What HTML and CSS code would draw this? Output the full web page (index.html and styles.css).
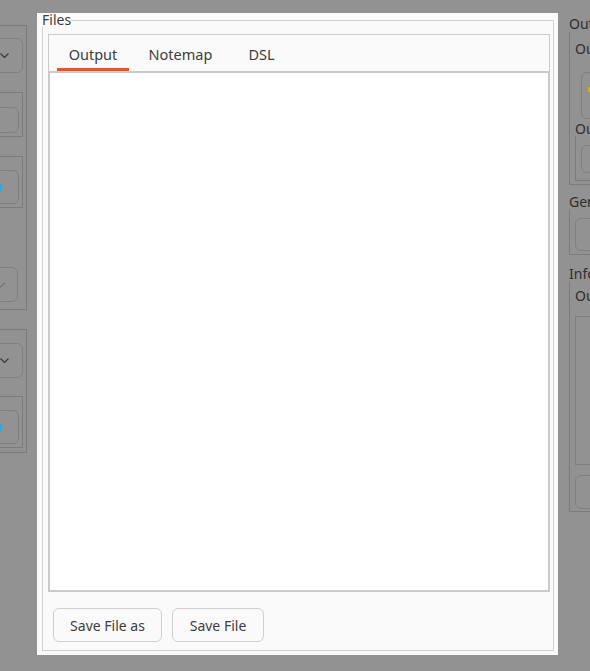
FILE: index.html
```
<!DOCTYPE html>
<html>
<head>
<meta charset="utf-8">
<link rel="stylesheet" href="styles.css">
</head>
<body>
<div class="left-strip">
  <div class="bg-frame frame-1">
    <div class="bg-combo combo-1">
      <svg class="chev" width="9" height="5" viewBox="0 0 9 5"><path d="M0.5 0.5 L4.5 4.5 L8.5 0.5" fill="none" stroke="#3a3a3a" stroke-width="1.2"/></svg>
    </div>
    <div class="bg-frame frame-a"><div class="bg-btn btn-a"></div></div>
    <div class="bg-frame frame-b"><div class="bg-btn btn-b"><span class="cyan"></span></div></div>
    <div class="bg-btn btn-c">
      <svg class="tick" width="6" height="6" viewBox="0 0 6 6"><path d="M0 5.5 L5 0.5" fill="none" stroke="#5a5a5a" stroke-width="1"/></svg>
    </div>
  </div>
  <div class="bg-frame frame-2">
    <div class="bg-combo combo-2">
      <svg class="chev" width="9" height="5" viewBox="0 0 9 5"><path d="M0.5 0.5 L4.5 4.5 L8.5 0.5" fill="none" stroke="#3a3a3a" stroke-width="1.2"/></svg>
    </div>
    <div class="bg-frame frame-c"><div class="bg-btn btn-b"><span class="cyan"></span></div></div>
  </div>
</div>

<div class="dialog">
  <fieldset class="files">
    <legend class="files-label">Files</legend>
    <div class="notebook">
      <div class="tabs">
        <div class="tab tab-output active">Output</div>
        <div class="tab tab-notemap">Notemap</div>
        <div class="tab tab-dsl">DSL</div>
      </div>
      <div class="page"></div>
    </div>
    <div class="actions">
      <button class="btn btn-saveas">Save File as</button>
      <button class="btn btn-save">Save File</button>
    </div>
  </fieldset>
</div>

<div class="right-strip">
  <div class="rs-label l-out">Out</div>
  <div class="rs-frame rf-out">
    <div class="rs-label">Ou</div>
    <div class="rs-btn rb-1"><span class="yellow"></span></div>
    <div class="rs-label l-ou2">Ou</div>
    <div class="rs-frame rf-inner"><div class="rs-btn rb-2"></div></div>
  </div>
  <div class="rs-label l-gen">Ger</div>
  <div class="rs-frame rf-gen"><div class="rs-btn rb-3"></div></div>
  <div class="rs-label l-info">Info</div>
  <div class="rs-frame rf-info">
    <div class="rs-label">Ou</div>
    <div class="rs-text"></div>
    <div class="rs-btn rb-4"></div>
  </div>
</div>
</body>
</html>
```
FILE: styles.css
```
* { box-sizing: border-box; }
html, body { margin: 0; padding: 0; }
body {
  width: 590px;
  height: 671px;
  overflow: hidden;
  background: #929292;
  display: flex;
  align-items: flex-start;
  font-family: "Noto Sans", "DejaVu Sans", sans-serif;
  font-size: 14px;
  color: #3d3d3d;
}

/* ---------- dimmed background, left ---------- */
.left-strip {
  width: 37px;
  height: 671px;
  flex: none;
  overflow: hidden;
  padding-right: 10px;
}
.bg-frame { border: 1px solid #7b7b7b; }
.frame-1, .frame-2 {
  width: 60px;
  margin-left: -33px;
  padding-right: 3px;
}
.frame-1 { margin-top: 25px; height: 285px; }
.frame-2 { margin-top: 19px; height: 124px; }
.bg-combo {
  height: 35px;
  border: 1px solid #7f7f7f;
  border-radius: 6px;
  display: flex;
  justify-content: flex-end;
  align-items: center;
  padding-right: 13px;
}
.combo-1 { margin-top: 12px; }
.combo-2 { margin-top: 13px; }
.chev { display: block; }
.frame-a { margin-top: 19px; height: 45px; padding-right: 3px; }
.frame-b { margin-top: 19px; height: 52px; padding-right: 3px; }
.frame-c { margin-top: 18px; height: 52px; padding-right: 3px; }
.bg-btn {
  border: 1px solid #7f7f7f;
  border-radius: 6px;
}
.btn-a { margin-top: 14px; height: 26px; }
.btn-b {
  margin-top: 13px;
  height: 34px;
  display: flex;
  justify-content: flex-end;
  align-items: center;
  padding-right: 16px;
}
.cyan { width: 2px; height: 7px; background: #1aaef0; }
.btn-c {
  margin-top: 59px;
  margin-right: 5px;
  height: 35px;
  display: flex;
  justify-content: flex-end;
  align-items: center;
  padding-right: 11px;
}
.tick { display: block; }

/* ---------- dialog ---------- */
.dialog {
  flex: none;
  width: 521px;
  height: 642px;
  margin-top: 13px;
  background: #fafafa;
  padding: 0 4px 4px 5px;
}
.files {
  margin: 0;
  height: 638px;
  border: 1px solid #d2d2d2;
  padding: 7px 3px 8px 5px;
  display: flex;
  flex-direction: column;
  min-width: 0;
}
.files-label {
  padding: 0;
  margin-left: -6px;
  line-height: 14px;
  color: #3d3d3d;
}
.notebook {
  height: 558px;
  flex: none;
  border: 1px solid #cacaca;
  display: flex;
  flex-direction: column;
  background: #fafafa;
}
.tabs {
  height: 36px;
  display: flex;
  flex: none;
}
.tab {
  height: 36px;
  display: flex;
  align-items: center;
  justify-content: center;
  border-bottom: 3px solid transparent;
  padding-top: 4px;
  white-space: nowrap;
  color: #3d3d3d;
  font-size: 14.5px;
}
.tab.active { border-bottom-color: #e95420; }
.tab-output { width: 72px; margin-left: 8px; }
.tab-notemap { width: 85px; margin-left: 9px; }
.tab-dsl { width: 49px; margin-left: 14px; }
.page {
  flex: 1;
  background: #ffffff;
  border: 1px solid #cacaca;
  border-top-width: 2px;
}
.actions {
  display: flex;
  gap: 10px;
  padding-left: 5px;
  margin-top: 16px;
}
.btn {
  height: 34px;
  border: 1px solid #cfcfcf;
  border-radius: 6px;
  background: #fafafa;
  font-family: inherit;
  font-size: 14px;
  color: #3d3d3d;
  padding: 0;
  display: flex;
  align-items: center;
  justify-content: center;
}
.btn-saveas { width: 109px; }
.btn-save { width: 92px; }

/* ---------- dimmed background, right ---------- */
.right-strip {
  flex: none;
  width: 32px;
  height: 671px;
  overflow: hidden;
  padding-left: 11px;
  padding-top: 16px;
}
.rs-label {
  white-space: nowrap;
  line-height: 14px;
  height: 14px;
  color: #2e2e2e;
}
.l-out { line-height: 16px; height: 16px; }
.rs-frame {
  width: 80px;
  border-left: 1px solid #7b7b7b;
  border-bottom: 1px solid #7b7b7b;
  padding-left: 5px;
}
.rf-out { height: 153px; padding-top: 10px; }
.rs-btn {
  border: 1px solid #7f7f7f;
  border-radius: 6px;
}
.rb-1 { margin-top: 16px; margin-left: 6px; height: 47px; padding: 14px 0 0 6px; }
.yellow { display: block; width: 2px; height: 5px; background: #d8b400; }
.l-ou2 { margin-top: 3px; }
.rf-inner { height: 45px; padding-top: 9px; }
.rb-2 { height: 28px; }
.l-gen { margin-top: 10px; }
.rf-gen { height: 46px; padding-top: 9px; }
.rb-3 { height: 33px; }
.l-info { margin-top: 12px; }
.rf-info { height: 231px; padding-top: 8px; }
.rs-text { margin-top: 13px; height: 149px; border: 1px solid #7f7f7f; }
.rb-4 { margin-top: 10px; height: 34px; }
```
